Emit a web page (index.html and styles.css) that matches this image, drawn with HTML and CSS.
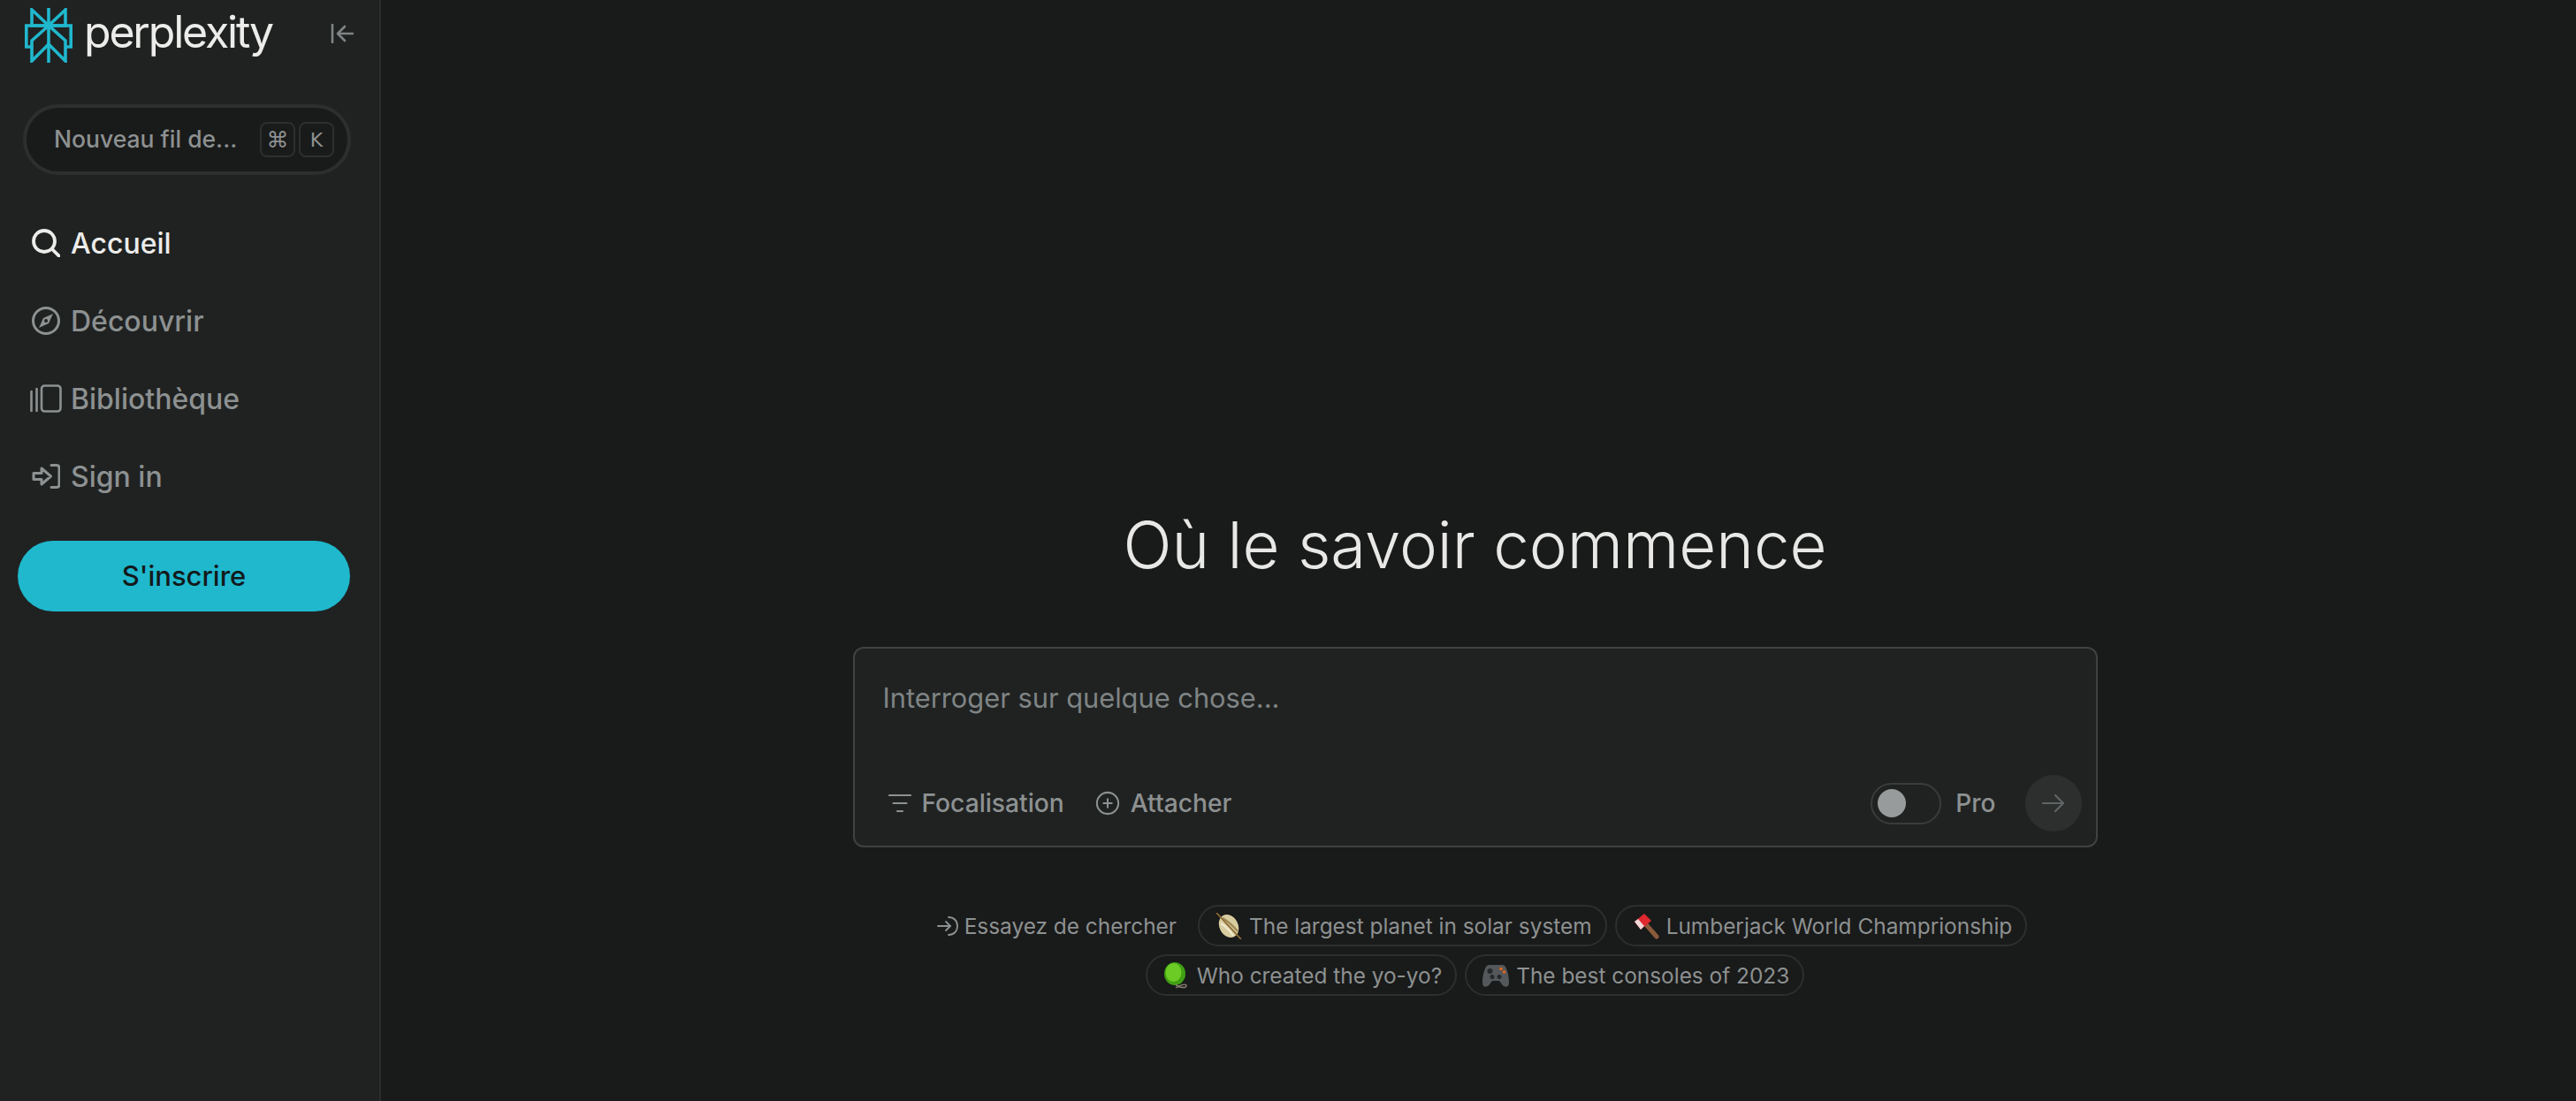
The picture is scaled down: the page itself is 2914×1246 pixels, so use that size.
FILE: index.html
```html
<!DOCTYPE html>
<html lang="fr">
<head>
    <meta charset="UTF-8">
    <meta name="viewport" content="width=device-width, initial-scale=1.0">
    <title>Perplexity</title>
    <link rel="stylesheet" href="styles.css">
</head>
<body>
    <div class="app">
        <aside class="sidebar">
            <div class="brand">
                <svg class="brand-mark" viewBox="0 0 54 62" fill="none" stroke="#20b8cd" stroke-width="3.6" stroke-linejoin="miter">
                    <path d="M27 0V62"/>
                    <path d="M8 2L27 20H8Z"/>
                    <path d="M46 2L27 20H46Z"/>
                    <path d="M8 44H1.8V20H52.2V44H46"/>
                    <path d="M27 20L8 37V60L27 41L46 60V37Z"/>
                </svg>
                <span class="brand-name">perplexity</span>
                <svg class="collapse" viewBox="0 0 26 22" fill="none" stroke="#7f8484" stroke-width="2.6" stroke-linecap="round" stroke-linejoin="round">
                    <path d="M2 1V21"/>
                    <path d="M25 11H9"/>
                    <path d="M16 3L8 11L16 19"/>
                </svg>
            </div>

            <div class="new-thread">
                <span class="new-thread-label">Nouveau fil de...</span>
                <span class="key cmd">⌘</span>
                <span class="key">K</span>
            </div>

            <nav class="nav">
                <a class="nav-item active">
                    <svg class="nav-icon" viewBox="0 0 32 32" fill="none" stroke="currentColor" stroke-width="3.8" stroke-linecap="round">
                        <circle cx="14" cy="14" r="12"/>
                        <path d="M23 23L31 31"/>
                    </svg>
                    Accueil
                </a>
                <a class="nav-item">
                    <svg class="nav-icon" viewBox="0 0 32 32" fill="none" stroke="currentColor" stroke-width="3">
                        <circle cx="16" cy="16" r="14.5"/>
                        <path d="M24 8L19 19L8 24L13 13Z" fill="currentColor" stroke="none"/>
                        <circle cx="16" cy="16" r="2" fill="#202222" stroke="none"/>
                    </svg>
                    Découvrir
                </a>
                <a class="nav-item">
                    <svg class="nav-icon wide" viewBox="0 0 36 32" fill="none" stroke="currentColor" stroke-width="2.6" stroke-linecap="round" stroke-linejoin="round">
                        <path d="M1.5 8V30"/>
                        <path d="M7.5 5V30"/>
                        <rect x="13" y="1.5" width="21.5" height="29" rx="3.5"/>
                    </svg>
                    Bibliothèque
                </a>
                <a class="nav-item">
                    <svg class="nav-icon" viewBox="0 0 32 28" fill="none" stroke="currentColor" stroke-width="3" stroke-linecap="round" stroke-linejoin="round">
                        <path d="M2 10.5H11V5L21.5 14L11 23V17.5H2Z"/>
                        <path d="M22 1.5H28C29.5 1.5 31 2.5 31 4.5V23.5C31 25.5 29.5 26.5 28 26.5H22"/>
                    </svg>
                    Sign in
                </a>
            </nav>

            <button class="signup">S'inscrire</button>
        </aside>

        <main class="main">
            <h1 class="title">Où le savoir commence</h1>

            <div class="ask">
                <div class="ask-placeholder">Interroger sur quelque chose...</div>
                <div class="ask-bar">
                    <span class="ask-action focus">
                        <svg class="ask-icon" viewBox="0 0 26 22" fill="none" stroke="currentColor" stroke-width="2.2" stroke-linecap="round">
                            <path d="M1 2H25"/>
                            <path d="M5.5 11H20.5"/>
                            <path d="M10 20H16"/>
                        </svg>
                        Focalisation
                    </span>
                    <span class="ask-action attach">
                        <svg class="ask-icon" viewBox="0 0 30 30" fill="none" stroke="currentColor" stroke-width="2.2" stroke-linecap="round">
                            <circle cx="15" cy="15" r="13"/>
                            <path d="M15 10V20"/>
                            <path d="M10 15H20"/>
                        </svg>
                        Attacher
                    </span>
                    <span class="toggle"><span class="knob"></span></span>
                    <span class="pro">Pro</span>
                    <span class="send">
                        <svg viewBox="0 0 26 22" width="26" height="22" fill="none" stroke="#606464" stroke-width="2.2" stroke-linecap="round" stroke-linejoin="round">
                            <path d="M1 11H24"/>
                            <path d="M15 2L24 11L15 20"/>
                        </svg>
                    </span>
                </div>
            </div>

            <div class="suggest">
                <span class="suggest-label">
                    <svg viewBox="0 0 24 24" width="24" height="24" fill="none" stroke="currentColor" stroke-width="1.8" stroke-linecap="round" stroke-linejoin="round">
                        <path d="M1 12H15"/>
                        <path d="M10 7L15 12L10 17"/>
                        <path d="M13 2C19 2 23 6 23 12C23 18 19 22 13 22"/>
                    </svg>
                    Essayez de chercher
                </span>
                <span class="chip">
                    <svg class="emoji" viewBox="0 0 30 30">
                        <ellipse cx="15" cy="15" rx="10.5" ry="13.5" transform="rotate(-28 15 15)" fill="#d8cda0"/>
                        <path d="M8 6C13 9 20 15 25 21" stroke="#a08a58" stroke-width="2.4" fill="none"/>
                        <path d="M6 12C11 15 17 21 20 26" stroke="#f0ead0" stroke-width="2.2" fill="none"/>
                        <path d="M1 0L29 30" stroke="#8d6a35" stroke-width="1.8" fill="none"/>
                    </svg>
                    The largest planet in solar system
                </span>
                <span class="chip">
                    <svg class="emoji" viewBox="0 0 30 30">
                        <path d="M13 11L27 27" stroke="#8b5a3a" stroke-width="5" stroke-linecap="round"/>
                        <path d="M2 10L13 1L21 9L9 19Z" fill="#e0282e"/>
                        <path d="M2 10L6 7L13 15L9 19Z" fill="#f0d8d8"/>
                    </svg>
                    Lumberjack World Champrionship
                </span>
                <span class="chip">
                    <svg class="emoji" viewBox="0 0 30 30">
                        <ellipse cx="13" cy="13" rx="12" ry="13" fill="#3f9f14"/>
                        <ellipse cx="11.5" cy="11.5" rx="9" ry="10.5" fill="#6ccb24"/>
                        <path d="M14 25C17 29 27 30 26 26C25 24 18 26 14 29" stroke="#8b8270" stroke-width="1.4" fill="none"/>
                    </svg>
                    Who created the yo-yo?
                </span>
                <span class="chip">
                    <svg class="emoji" viewBox="0 0 30 30">
                        <path d="M7 3H23C27 3 30 14 30 23C30 29 25 29 22 25L19 21H11L8 25C5 29 0 29 0 23C0 14 3 3 7 3Z" fill="#55585a"/>
                        <circle cx="8.5" cy="10" r="3" fill="#26282a"/>
                        <circle cx="21" cy="7.5" r="1.8" fill="#e2661b"/>
                        <circle cx="24.5" cy="11" r="1.8" fill="#e2661b"/>
                        <circle cx="11" cy="16.5" r="2.5" fill="#26282a"/>
                        <circle cx="19" cy="16.5" r="2.5" fill="#26282a"/>
                    </svg>
                    The best consoles of 2023
                </span>
            </div>
        </main>
    </div>
</body>
</html>
```

FILE: styles.css
```css
* {
    box-sizing: border-box;
}

body {
    margin: 0;
    background-color: #191a1a;
    color: #e8e8e6;
    font-family: Inter, "Liberation Sans", sans-serif;
}

.app {
    display: flex;
    height: 1246px;
    overflow: hidden;
}

/* sidebar */

.sidebar {
    flex: 0 0 431px;
    padding: 9px 0 0 20px;
    background-color: #202222;
    border-right: 2px solid #2b2d2d;
}

.brand {
    display: flex;
    align-items: center;
    height: 62px;
    padding-left: 8px;
}

.brand-mark {
    width: 54px;
    height: 62px;
}

.brand-name {
    margin: 0 0 8px 13px;
    font-size: 50px;
    font-weight: 400;
    letter-spacing: -2.2px;
    line-height: 50px;
    color: #ececea;
}

.collapse {
    width: 26px;
    height: 22px;
    margin-left: auto;
    margin-right: 29px;
    margin-bottom: 4px;
}

.new-thread {
    display: flex;
    align-items: center;
    width: 371px;
    height: 80px;
    margin: 47px 0 0 6px;
    padding-left: 31px;
    background-color: #191a1a;
    border: 4px solid #2d2f2f;
    border-radius: 40px;
    color: #8d9191;
}

.new-thread-label {
    width: 233px;
    padding-bottom: 2px;
    font-size: 26.5px;
    font-weight: 500;
    white-space: nowrap;
}

.key {
    display: flex;
    align-items: center;
    justify-content: center;
    width: 40px;
    height: 40px;
    margin-right: 4px;
    border: 2px solid #2d2f2f;
    border-radius: 8px;
    font-family: "DejaVu Sans", sans-serif;
    font-size: 22px;
    color: #8d9191;
}

.key.cmd {
    font-size: 25px;
}

.nav {
    display: flex;
    flex-direction: column;
    margin-top: 33px;
    padding-left: 16px;
}

.nav-item {
    display: flex;
    align-items: center;
    gap: 12px;
    height: 88px;
    font-size: 32px;
    font-weight: 500;
    color: #8d9191;
}

.nav-item.active {
    color: #ececea;
}

.nav-icon {
    width: 32px;
    height: 32px;
    flex: none;
}

.nav-icon.wide {
    width: 36px;
    margin: 0 -2px;
}

.signup {
    display: block;
    width: 376px;
    height: 80px;
    margin-top: 29px;
    padding: 0 0 2px;
    background-color: #1fb8cd;
    border: none;
    border-radius: 40px;
    font-family: Inter, "Liberation Sans", sans-serif;
    font-size: 31px;
    font-weight: 500;
    color: #13191b;
}

/* main column */

.main {
    flex: 1;
    display: flex;
    flex-direction: column;
    align-items: center;
    padding: 571px 8px 0 0;
}

.title {
    margin: 0;
    font-size: 72.5px;
    font-weight: 300;
    line-height: 92px;
    color: #e8e8e6;
}

.ask {
    width: 1408px;
    height: 227px;
    margin-top: 69px;
    padding: 0 16px 16px 32px;
    display: flex;
    flex-direction: column;
    justify-content: space-between;
    background-color: #202222;
    border: 2px solid #3f4142;
    border-radius: 12px;
}

.ask-placeholder {
    margin-top: 36px;
    font-size: 30.8px;
    line-height: 40px;
    color: #7f8484;
}

.ask-bar {
    display: flex;
    align-items: center;
    height: 64px;
    color: #8d9191;
}

.ask-action {
    display: flex;
    align-items: center;
    gap: 12px;
    font-size: 28.2px;
    font-weight: 500;
}

.ask-icon {
    width: 26px;
    height: 28px;
}

.focus {
    margin-left: 6px;
}

.attach {
    margin-left: 35px;
}

.attach .ask-icon {
    width: 28px;
}

.toggle {
    display: flex;
    align-items: center;
    width: 80px;
    height: 47px;
    margin-left: auto;
    margin-right: -1px;
    padding-left: 6px;
    border: 2px solid #3a3c3c;
    border-radius: 24px;
}

.knob {
    width: 32px;
    height: 32px;
    background-color: #979b9b;
    border-radius: 50%;
}

.pro {
    margin-left: 17px;
    font-size: 28px;
    font-weight: 500;
}

.send {
    display: flex;
    align-items: center;
    justify-content: center;
    width: 64px;
    height: 64px;
    margin-left: 33px;
    background-color: #2d2f2f;
    border-radius: 50%;
}

.suggest {
    display: flex;
    flex-wrap: wrap;
    justify-content: center;
    gap: 9px;
    width: 1408px;
    margin-top: 65px;
    font-size: 24.4px;
    color: #8d9191;
}

.suggest-label {
    display: flex;
    align-items: center;
    gap: 7px;
    height: 47px;
    padding: 0 15px 0 16px;
}

.chip {
    display: flex;
    align-items: center;
    gap: 8px;
    height: 47px;
    padding: 0 15px 0 18px;
    border: 2px solid #2d2f2f;
    border-radius: 24px;
    white-space: nowrap;
}

.emoji {
    width: 30px;
    height: 30px;
    flex: none;
}
```
